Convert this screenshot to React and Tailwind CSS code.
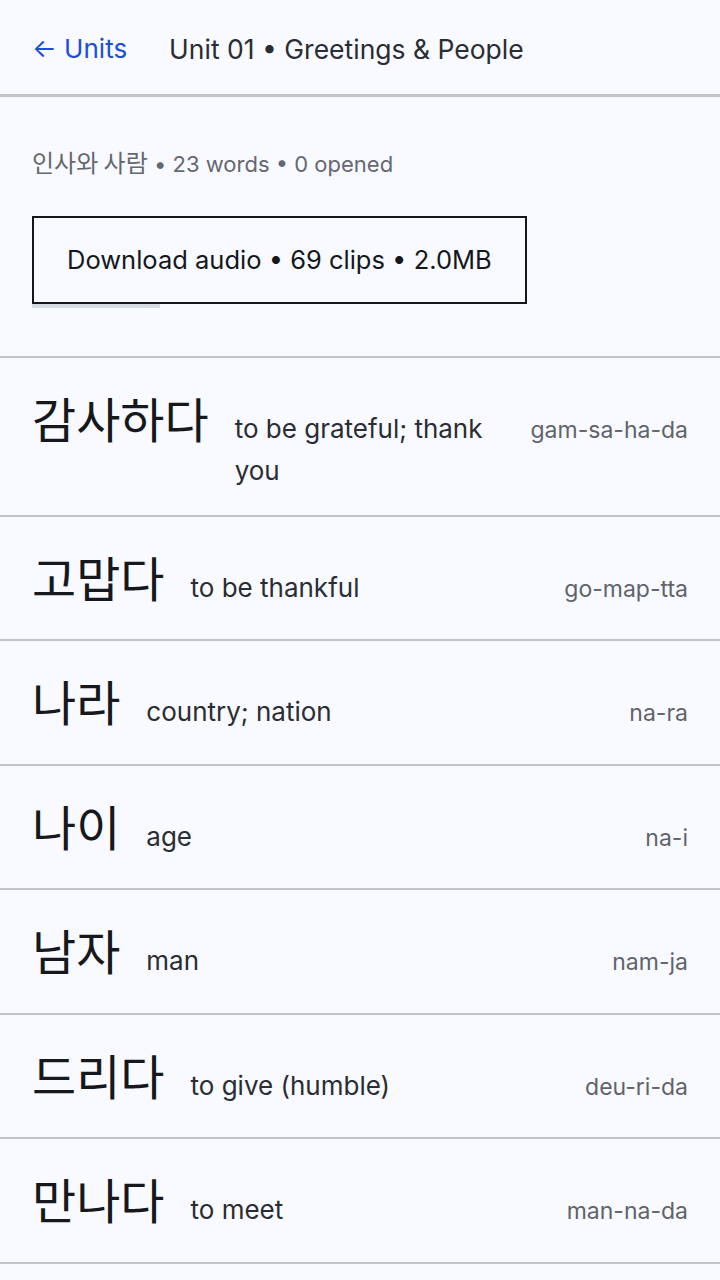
import React from "react";

const words = [
  { ko: "감사하다", en: "to be grateful; thank you", rom: "gam-sa-ha-da" },
  { ko: "고맙다", en: "to be thankful", rom: "go-map-tta" },
  { ko: "나라", en: "country; nation", rom: "na-ra" },
  { ko: "나이", en: "age", rom: "na-i" },
  { ko: "남자", en: "man", rom: "nam-ja" },
  { ko: "드리다", en: "to give (humble)", rom: "deu-ri-da" },
  { ko: "만나다", en: "to meet", rom: "man-na-da" },
];

const font = { fontFamily: "Inter, 'Noto Sans CJK KR', sans-serif" };

export default function App() {
  return (
    <div className="min-h-[1280px] w-[720px] bg-[#f8faff] text-[#1f2328]" style={font}>
      <header className="flex h-[97px] items-center gap-[42px] border-b-[3px] border-[#c0c5cc] px-8 pt-[4px]">
        <a className="text-[26px] leading-none text-[#1d4ed8]">← Units</a>
        <h1 className="text-[26.5px] leading-none text-[#2a2d33]">Unit 01 • Greetings &amp; People</h1>
      </header>
      <section className="px-8 pt-[48px] pb-[48px]">
        <p className="text-[22px] leading-[33px] text-[#646870]">
          <span className="font-['Noto_Sans_CJK_KR'] text-[24px]">인사와 사람</span> • 23 words • 0 opened
        </p>
        <div className="mt-[35px] inline-flex flex-col">
          <button className="border-2 border-[#14171c] px-[33px] py-[23px] text-[25.5px] leading-[38px] text-[#14171c]">
            Download audio • 69 clips • 2.0MB
          </button>
          <div className="h-[4px] w-[128px] bg-[#d8dde5]" />
        </div>
      </section>
      <ul className="border-t-2 border-[#c0c5cc]">
        {words.map((w) => (
          <li key={w.ko} className="flex items-baseline gap-[26px] border-b-2 border-[#c0c5cc] px-8 pt-[18px] pb-[22.5px]">
            <span className="shrink-0 font-['Noto_Sans_CJK_KR'] text-[48px] leading-[82px] text-[#16181c]">{w.ko}</span>
            <span className="min-w-0 flex-1 text-[26px] leading-[42px] text-[#2a2d33]">{w.en}</span>
            <span className="ml-auto shrink-0 pl-[18px] text-[23px] leading-[33px] text-[#5f636b]">{w.rom}</span>
          </li>
        ))}
      </ul>
    </div>
  );
}
